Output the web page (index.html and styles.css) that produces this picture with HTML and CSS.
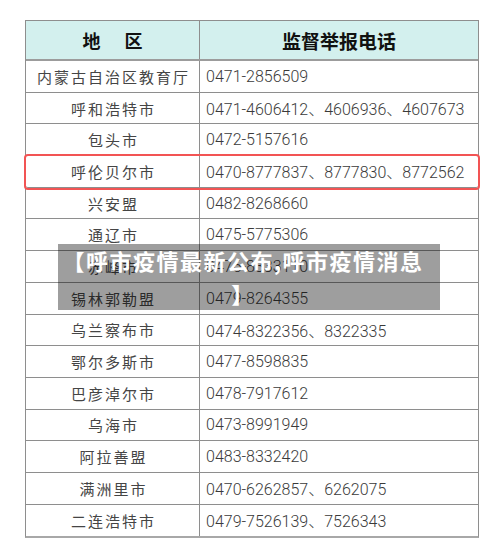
FILE: index.html
```html
<!DOCTYPE html>
<html lang="zh-CN">
<head>
<meta charset="utf-8">
<title>呼市疫情最新公布</title>
<link rel="stylesheet" href="styles.css">
</head>
<body>
<div class="page">
  <div class="sheet">
    <div class="row head">
      <div class="cell area">地　区</div>
      <div class="cell tel">监督举报电话</div>
    </div>
    <div class="row"><div class="cell area">内蒙古自治区教育厅</div><div class="cell tel">0471-2856509</div></div>
    <div class="row"><div class="cell area">呼和浩特市</div><div class="cell tel">0471-4606412、4606936、4607673</div></div>
    <div class="row"><div class="cell area">包头市</div><div class="cell tel">0472-5157616</div></div>
    <div class="row hl"><div class="cell area">呼伦贝尔市</div><div class="cell tel">0470-8777837、8777830、8772562</div></div>
    <div class="row"><div class="cell area">兴安盟</div><div class="cell tel">0482-8268660</div></div>
    <div class="row"><div class="cell area">通辽市</div><div class="cell tel">0475-5775306</div></div>
    <div class="row"><div class="cell area">赤峰市</div><div class="cell tel">0476-8333110</div></div>
    <div class="row"><div class="cell area">锡林郭勒盟</div><div class="cell tel">0479-8264355</div></div>
    <div class="row"><div class="cell area">乌兰察布市</div><div class="cell tel">0474-8322356、8322335</div></div>
    <div class="row"><div class="cell area">鄂尔多斯市</div><div class="cell tel">0477-8598835</div></div>
    <div class="row"><div class="cell area">巴彦淖尔市</div><div class="cell tel">0478-7917612</div></div>
    <div class="row"><div class="cell area">乌海市</div><div class="cell tel">0473-8991949</div></div>
    <div class="row"><div class="cell area">阿拉善盟</div><div class="cell tel">0483-8332420</div></div>
    <div class="row"><div class="cell area">满洲里市</div><div class="cell tel">0470-6262857、6262075</div></div>
    <div class="row last"><div class="cell area">二连浩特市</div><div class="cell tel">0479-7526139、7526343</div></div>
  </div>
  <div class="caption">【呼市疫情最新公布,呼市疫情消息】</div>
</div>
</body>
</html>
```
FILE: styles.css
```css
html, body {
  margin: 0;
  padding: 0;
  background: #ffffff;
}

.page {
  position: relative;
  width: 500px;
  height: 556px;
  padding-top: 20px;
  box-sizing: border-box;
  font-family: "Noto Sans CJK SC", "Noto Sans", sans-serif;
}

.sheet {
  margin-left: 25px;
  width: 454px;
  box-sizing: border-box;
  border: 1px solid #8e8e8e;
  border-bottom: 2px solid #a8a8a8;
}

.row {
  display: grid;
  grid-template-columns: 174px 1fr;
  height: 31.7px;
  box-sizing: border-box;
  border-bottom: 1px solid #8e8e8e;
}

.row.last {
  border-bottom: none;
}

.cell {
  display: flex;
  align-items: center;
  min-width: 0;
  white-space: nowrap;
}

.cell.area {
  justify-content: center;
  border-right: 1px solid #8e8e8e;
  font-size: 15px;
  letter-spacing: 2px;
  padding-left: 2px;
  color: #454545;
}

.cell.tel {
  padding-left: 6px;
  font-family: Roboto, "Noto Sans CJK SC", sans-serif;
  font-weight: 300;
  font-size: 16px;
  color: #3a3a3a;
}

.row.head {
  height: 40px;
  background: #d3f0ee;
  border-bottom: 2px solid #9c9c9c;
}

.row.head .cell {
  font-family: "Noto Sans CJK SC", sans-serif;
  font-weight: 700;
  color: #111111;
  justify-content: center;
}

.row.head .cell.area {
  font-size: 18px;
  letter-spacing: 3px;
  padding-left: 3px;
}

.row.head .cell.tel {
  font-size: 19px;
  padding-left: 0;
}

.row.hl {
  outline: 2px solid #f25454;
  outline-offset: 0;
  border-radius: 2px;
  position: relative;
  z-index: 1;
}

.caption {
  position: absolute;
  left: 58px;
  top: 244px;
  width: 382px;
  height: 66px;
  box-sizing: border-box;
  padding: 0 14px 0 2px;
  background: rgba(0, 0, 0, 0.38);
  color: #ffffff;
  font-family: "Noto Sans CJK SC", sans-serif;
  font-weight: 700;
  font-size: 22px;
  letter-spacing: 1.5px;
  line-height: 33px;
  line-break: anywhere;
  text-align: center;
  z-index: 2;
}
```
